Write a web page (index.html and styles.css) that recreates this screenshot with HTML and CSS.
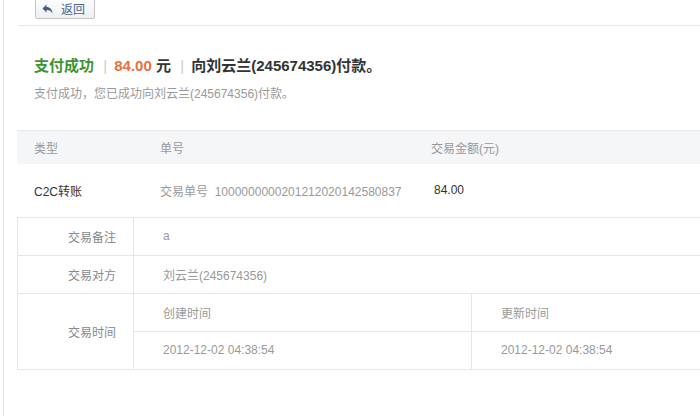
FILE: index.html
```html
<!DOCTYPE html>
<html lang="zh-CN">
<head>
  <meta charset="UTF-8">
  <title>交易详情</title>
  <link rel="stylesheet" href="styles.css">
</head>
<body>
  <div class="page">
    <div class="toolbar">
      <a class="btn-back" href="#">
        <svg width="11" height="10" viewBox="0 0 11 10"><path d="M4.5 0.5 L0.5 4.5 L4.5 8.5 V6 C7.5 6 9.2 7 10.5 9.5 C10.3 5.5 8 3 4.5 3 Z" fill="#3f5f80"/></svg>
        返回
      </a>
    </div>

    <div class="result">
      <h2 class="result-title">
        <span class="ok">支付成功</span>
        <span class="sep">|</span>
        <span class="amount">84.00</span> 元
        <span class="sep">|</span>
        向刘云兰(245674356)付款。
      </h2>
      <p class="result-desc">支付成功，您已成功向刘云兰(245674356)付款。</p>
    </div>

    <table class="trade">
      <thead>
        <tr>
          <th class="c-type">类型</th>
          <th class="c-no">单号</th>
          <th class="c-amount">交易金额(元)</th>
        </tr>
      </thead>
      <tbody>
        <tr>
          <td class="c-type dark">C2C转账</td>
          <td class="c-no">交易单号&nbsp; 1000000000201212020142580837</td>
          <td class="c-amount dark"><span class="num">84.00</span></td>
        </tr>
      </tbody>
    </table>

    <table class="detail">
      <tr class="first">
        <th>交易备注</th>
        <td colspan="2">a</td>
      </tr>
      <tr>
        <th>交易对方</th>
        <td colspan="2">刘云兰(245674356)</td>
      </tr>
      <tr>
        <th rowspan="2">交易时间</th>
        <td class="t-left">创建时间</td>
        <td class="t-right">更新时间</td>
      </tr>
      <tr>
        <td class="t-left">2012-12-02 04:38:54</td>
        <td class="t-right">2012-12-02 04:38:54</td>
      </tr>
    </table>
  </div>
</body>
</html>
```

FILE: styles.css
```css
* {
  box-sizing: border-box;
  margin: 0;
  padding: 0;
}

body {
  font-family: "Liberation Sans", "Noto Sans CJK SC", sans-serif;
  font-size: 12px;
  color: #333;
  background: #fff;
  overflow: hidden;
}

/* Kontener */
.page {
  margin-left: 3px;
  border-left: 1px solid #e2e2e2;
  min-height: 416px;
  width: 697px;
  padding-left: 13px;
}

/* Pasek z przyciskiem */
.toolbar {
  height: 26px;
  border-bottom: 1px solid #e6e6e6;
  margin-left: 1px;
}

.btn-back {
  display: inline-flex;
  align-items: center;
  gap: 8px;
  margin-left: 17px;
  margin-top: -5px;
  height: 24px;
  padding: 3px 9px 0 6px;
  border: 1px solid #c4c4c4;
  border-radius: 2px;
  background: linear-gradient(#fff, #eef0f2);
  color: #46678a;
  font-size: 12px;
  text-decoration: none;
}

/* Wynik płatności */
.result {
  padding: 30px 0 0 17px;
}

.result-title {
  font-size: 15px;
  font-weight: bold;
  color: #333;
  line-height: 20px;
}

.result-title .ok {
  color: #3d9432;
}

.result-title .sep {
  color: #ccc;
  font-weight: normal;
  margin: 0 3px 0 5px;
}

.result-title .amount {
  color: #e5713e;
}

.result-desc {
  margin-top: 10px;
  color: #999;
  line-height: 16px;
}

/* Tabele */
table {
  border-collapse: collapse;
  width: 684px;
}

.trade {
  margin-top: 28px;
  border-top: 1px solid #e8e8e8;
}

.trade th {
  background: #f5f6f7;
  height: 33px;
  font-weight: normal;
  color: #999;
  text-align: left;
}

.trade td {
  height: 54px;
  color: #999;
  border-bottom: 1px solid #e6e6e6;
}

.trade th,
.trade td {
  padding-left: 17px;
}

.trade .c-type { width: 126px; }
.trade .c-no { width: 271px; }
.trade .dark { color: #333; }
.trade .num { padding-left: 3px; }

.detail th,
.detail td {
  height: 38px;
  border: 1px solid #e6e6e6;
  border-top: none;
}

.detail .first th,
.detail .first td {
  height: 37px;
}

.detail th {
  width: 116px;
  padding-right: 17px;
  text-align: right;
  font-weight: normal;
  color: #888;
}

.detail td {
  padding-left: 29px;
  color: #999;
  border-right: none;
}

.detail .t-left {
  width: 338px;
  border-right: 1px solid #e6e6e6;
}
```
